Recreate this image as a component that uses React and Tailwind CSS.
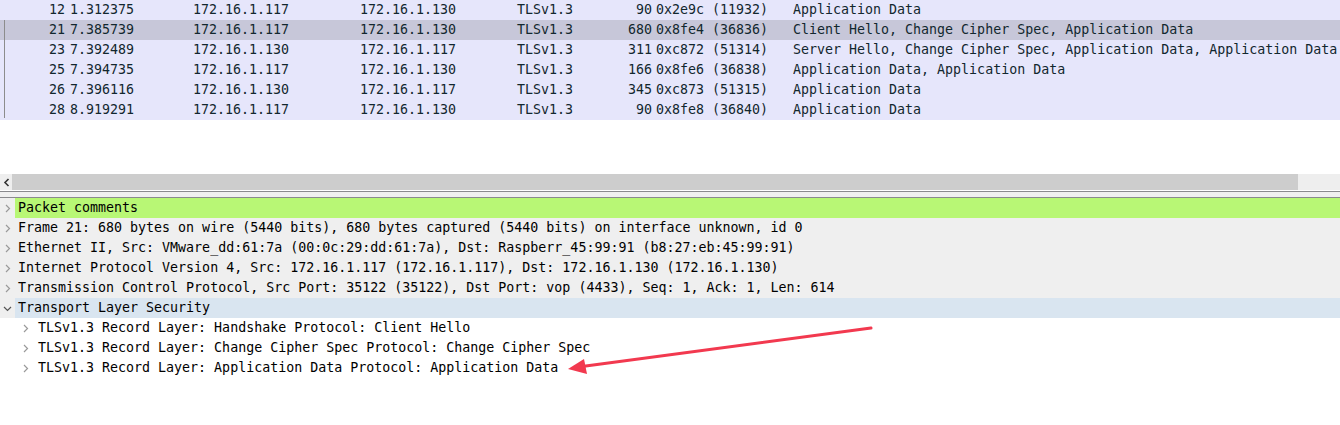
import React from 'react';

const packets = [
  { no: 12, time: '1.312375', src: '172.16.1.117', dst: '172.16.1.130', len: 90, id: '0x2e9c (11932)', info: 'Application Data' },
  { no: 21, time: '7.385739', src: '172.16.1.117', dst: '172.16.1.130', len: 680, id: '0x8fe4 (36836)', info: 'Client Hello, Change Cipher Spec, Application Data', selected: true },
  { no: 23, time: '7.392489', src: '172.16.1.130', dst: '172.16.1.117', len: 311, id: '0xc872 (51314)', info: 'Server Hello, Change Cipher Spec, Application Data, Application Data' },
  { no: 25, time: '7.394735', src: '172.16.1.117', dst: '172.16.1.130', len: 166, id: '0x8fe6 (36838)', info: 'Application Data, Application Data' },
  { no: 26, time: '7.396116', src: '172.16.1.130', dst: '172.16.1.117', len: 345, id: '0xc873 (51315)', info: 'Application Data' },
  { no: 28, time: '8.919291', src: '172.16.1.117', dst: '172.16.1.130', len: 90, id: '0x8fe8 (36840)', info: 'Application Data' },
];

const tree = [
  { text: 'Packet comments', bg: 'bg-[#b8f775]' },
  { text: 'Frame 21: 680 bytes on wire (5440 bits), 680 bytes captured (5440 bits) on interface unknown, id 0', bg: 'bg-[#efefef]' },
  { text: 'Ethernet II, Src: VMware_dd:61:7a (00:0c:29:dd:61:7a), Dst: Raspberr_45:99:91 (b8:27:eb:45:99:91)', bg: 'bg-[#efefef]' },
  { text: 'Internet Protocol Version 4, Src: 172.16.1.117 (172.16.1.117), Dst: 172.16.1.130 (172.16.1.130)', bg: 'bg-[#efefef]' },
  { text: 'Transmission Control Protocol, Src Port: 35122 (35122), Dst Port: vop (4433), Seq: 1, Ack: 1, Len: 614', bg: 'bg-[#efefef]' },
  { text: 'Transport Layer Security', bg: 'bg-[#d9e5f0]', open: true },
];

const children = [
  'TLSv1.3 Record Layer: Handshake Protocol: Client Hello',
  'TLSv1.3 Record Layer: Change Cipher Spec Protocol: Change Cipher Spec',
  'TLSv1.3 Record Layer: Application Data Protocol: Application Data',
];

function Chevron({ open }) {
  return (
    <svg width="9" height="9" viewBox="0 0 9 9" className="shrink-0">
      {open ? (
        <path d="M1 3 L4.5 6.5 L8 3" fill="none" stroke="#555" strokeWidth="1.2" />
      ) : (
        <path d="M3 1 L6.5 4.5 L3 8" fill="none" stroke="#9a9a9a" strokeWidth="1.2" />
      )}
    </svg>
  );
}

export default function App() {
  return (
    <div
      className="relative w-[1340px] h-[425px] overflow-hidden bg-white text-[13.3px] leading-[20px]"
      style={{ fontFamily: '"DejaVu Sans Mono", "Liberation Mono", monospace' }}
    >
      {/* Packet list */}
      <div className="relative">
        {packets.map((p) => (
          <div
            key={p.no}
            className={`flex h-[20px] whitespace-nowrap text-[#12272e] ${p.selected ? 'bg-[#c7c7d9]' : 'bg-[#e6e6fb]'}`}
          >
            <div className="w-[65px] text-right">{p.no}</div>
            <div className="w-[128px] pl-[5px]">{p.time}</div>
            <div className="w-[167px]">{p.src}</div>
            <div className="w-[157px]">{p.dst}</div>
            <div className="w-[80px]">TLSv1.3</div>
            <div className="w-[55px] text-right">{p.len}</div>
            <div className="w-[141px] pl-[4px]">{p.id}</div>
            <div className="flex-1 overflow-hidden">{p.info}</div>
          </div>
        ))}
        <div className="absolute left-[4px] top-[20px] h-[98px] w-px bg-[#8c8c8c]" />
      </div>

      <div className="h-[54px]" />

      {/* Horizontal scrollbar */}
      <div className="flex h-[16px] bg-[#eeeeee]">
        <div className="flex w-[12px] items-center justify-center">
          <svg width="7" height="9" viewBox="0 0 7 9">
            <path d="M5.5 1 L2 4.5 L5.5 8" fill="none" stroke="#333" strokeWidth="1.6" />
          </svg>
        </div>
        <div className="w-[1286px] bg-[#cdcdcd]" />
      </div>

      {/* Splitter */}
      <div className="mt-px h-[7px] border-y border-[#8a8a8e] bg-[#f0f0f0]" />

      {/* Packet details */}
      <div className="text-black">
        {tree.map((r) => (
          <div key={r.text} className="flex h-[20px] whitespace-nowrap bg-[#efefef]">
            <div className="flex w-[15px] items-center justify-center">
              <Chevron open={r.open} />
            </div>
            <div className={`flex-1 pl-[3px] ${r.bg}`}>{r.text}</div>
          </div>
        ))}
        {children.map((t) => (
          <div key={t} className="flex h-[20px] items-center whitespace-nowrap pl-[21px]">
            <div className="flex w-[17px] items-center">
              <Chevron />
            </div>
            <div>{t}</div>
          </div>
        ))}
      </div>

      {/* Annotation arrow */}
      <svg className="pointer-events-none absolute left-0 top-0" width="1340" height="425">
        <line x1="871" y1="328" x2="582" y2="366.5" stroke="#f2394f" strokeWidth="3" strokeLinecap="round" />
        <polygon points="568,369 584,359 587,374" fill="#f2394f" />
      </svg>
    </div>
  );
}
